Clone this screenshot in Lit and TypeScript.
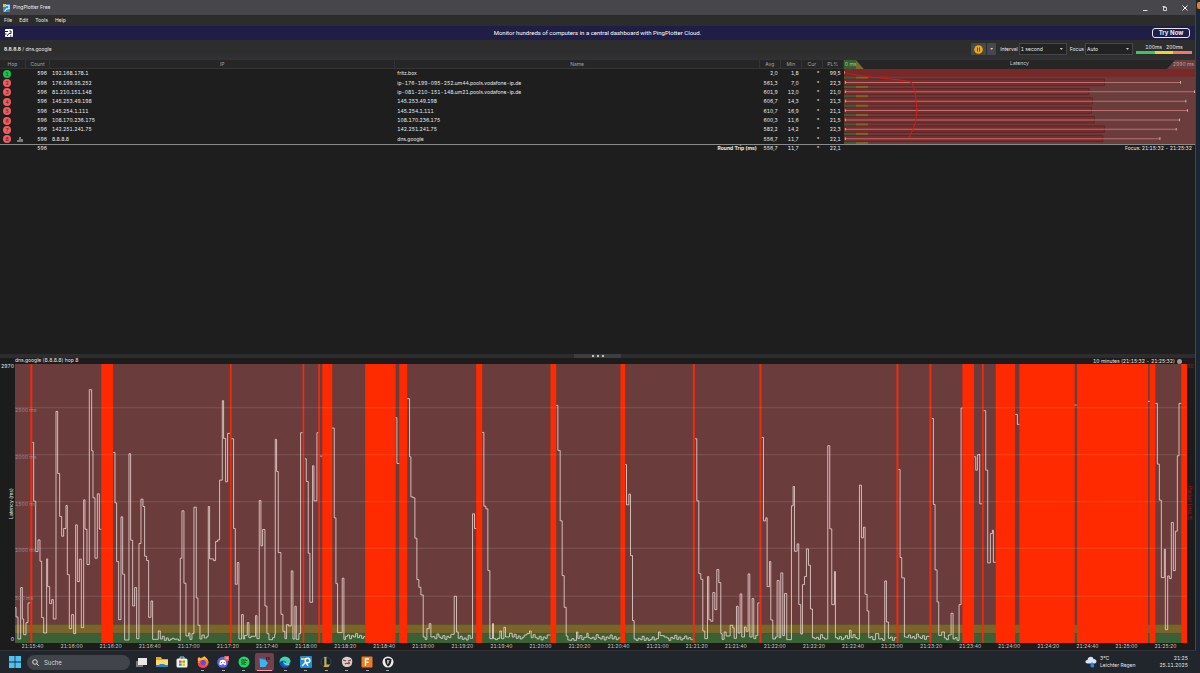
import { LitElement, html, svg, css } from "lit";
import { customElement } from "lit/decorators.js";

interface Hop {
  ip: string;
  name: string;
  avg: string;
  min: string;
  loss: string;
  bar: number;
  max: number;
}

const HOPS: Hop[] = [
  { ip: "192.168.178.1", name: "fritz.box", avg: "2,0", min: "1,8", loss: "99,5", bar: 1055, max: 0 },
  { ip: "176.199.95.252", name: "ip-176-199-095-252.um44.pools.vodafone-ip.de", avg: "561,3", min: "7,0", loss: "22,3", bar: 783, max: 1011 },
  { ip: "81.210.151.148", name: "ip-081-210-151-148.um21.pools.vodafone-ip.de", avg: "601,9", min: "12,0", loss: "21,0", bar: 736, max: 1053 },
  { ip: "145.253.49.198", name: "145.253.49.198", avg: "606,7", min: "14,3", loss: "21,3", bar: 747, max: 1027 },
  { ip: "145.254.1.111", name: "145.254.1.111", avg: "610,7", min: "16,9", loss: "21,1", bar: 743, max: 1032 },
  { ip: "108.170.236.175", name: "108.170.236.175", avg: "600,3", min: "11,6", loss: "21,5", bar: 752, max: 1008 },
  { ip: "142.251.241.75", name: "142.251.241.75", avg: "582,2", min: "14,2", loss: "22,3", bar: 783, max: 998 },
  { ip: "8.8.8.8", name: "dns.google", avg: "556,7", min: "11,7", loss: "22,1", bar: 778, max: 949 },
];

// Packet loss spans: start, end
const LOSS: [number, number][] = [
  [90, 96], [303, 338], [689, 694], [907, 912], [954, 959], [966, 996], [1095, 1186],
  [1197, 1221], [1428, 1446], [1651, 1668], [1861, 1875], [2078, 2084], [2278, 2284],
  [2689, 2695], [2788, 2794], [2887, 2922], [2946, 2951], [2987, 3045], [3058, 3224],
  [3231, 3444], [3449, 3466], [3544, 3561],
];

// Latency runs between losses: "x level" steps, closed by the final x
const RUNS: string[] = [
  "44 772 47 800 53 866 61 712 66 806 70 853 77 817 83 758 90",
  "96 277 100 453 106 604 113 569 119 633 124 802 130 848 139 626 142 709 148 760 154 748 159 806 167 184 172 370 178 499 184 558 190 535 197 466 201 673 207 835 214 793 220 850 226 524 231 694 237 627 243 832 250 449 254 537 260 643 267 119 274 302 278 443 284 624 291 431 297 537 303",
  "338 307 344 458 349 634 355 808 362 500 367 672 373 869 386 311 391 570 397 767 403 712 409 865 416 580 422 447 428 469 433 618 439 631 445 801 452 752 457 867 474 842 480 866 515 864 522 867 540 624 545 482 551 699 557 857 565 848 569 867 575 850 581 471 588 743 593 825 599 866 605 854 612 863 620 858 624 469 628 626 640 631 646 574 652 569 658 390 666 152 670 265 676 395 682 250 689",
  "694 266 700 535 705 702 711 637 716 866 724 793 729 866 733 855 741 817 746 862 752 858 766 796 770 865 777 451 782 587 787 538 794 767 800 850 806 868 817 862 823 852 825 268 829 364 834 607 842 792 848 843 854 865 859 823 865 827 873 662 878 866 884 768 888 867 896 850 901 248 907",
  "914 326 918 394 924 609 929 756 937 347 941 452 950 248 954",
  "960 318 966",
  "996 234 1002 503 1007 700 1012 847 1026 684 1031 867 1036 858 1095",
  "1186 203 1190 340 1197",
  "1221 146 1228 320 1232 440 1238 443 1244 564 1250 688 1256 711 1262 734 1269 860 1275 867 1280 835 1287 820 1292 860 1362 738 1369 845 1374 864 1417 491 1423 535 1428",
  "1446 247 1451 468 1457 476 1463 661 1469 865 1477 820 1480 865 1499 842 1504 865 1511 831 1516 860 1528 849 1536 860 1580 850 1588 842 1593 862 1651",
  "1668 166 1673 301 1680 512 1686 676 1692 771 1698 857 1703 869 1729 845 1733 864 1760 849 1764 862 1861",
  "1875 343 1879 464 1886 432 1891 616 1897 811 1902 866 1975 845 1980 856 2000 863 2078",
  "2085 266 2090 452 2096 670 2102 687 2108 842 2114 865 2122 679 2126 808 2132 813 2138 727 2144 778 2150 658 2156 697 2162 850 2166 867 2172 845 2178 857 2190 825 2198 833 2202 864 2209 768 2214 848 2220 731 2225 860 2233 830 2238 843 2244 671 2249 860 2256 745 2261 865 2267 855 2273 758 2278",
  "2285 262 2290 512 2297 503 2301 709 2308 634 2312 809 2318 866 2326 860 2331 691 2337 862 2342 668 2348 856 2353 730 2360 868 2374 467 2379 409 2383 603 2391 581 2396 763 2402 851 2407 703 2413 679 2419 596 2425 645 2431 776 2437 862 2483 287 2489 536 2495 763 2503 664 2506 862 2548 840 2553 862 2578 405 2584 563 2590 531 2595 732 2601 782 2606 862 2626 850 2636 866 2654 692 2659 815 2665 864 2689",
  "2695 358 2700 622 2705 683 2713 860 2788",
  "2795 205 2800 463 2805 659 2811 755 2816 855 2825 845 2833 863 2853 789 2859 866 2877 763 2883 174 2887",
  "2922 320 2927 360 2932 314 2938 312 2939 461 2946",
  "2951 182 2957 360 2963 638 2971 550 2977 540 2980 636 2987",
  "3045 193 3052 223 3058",
  "3224 165 3230",
  "3444 154 3449",
  "3466 160 3472 342 3478 450 3484 682 3493 597 3496 838 3503 677 3508 685 3514 517 3520 661 3526 543 3532 317 3537 160 3544",
];

const RIPPLE = [2, -8, 4, -3, 6, 1, -6, 3, -1, 5, -9, 0, 4, -4, 7, -2];

// Builds a stepped outline; long idle stretches get a small ripple
function stepPath(run: string): string {
  const n = run.split(" ").map(Number);
  let d = `M${n[0]} ${n[1]}`;
  for (let i = 0; i + 2 < n.length; i += 2) {
    const level = n[i + 1];
    const next = n[i + 2];
    if (i > 0) d += `V${level}`;
    if (level > 850 && next - n[i] > 17) {
      for (let x = n[i] + 6; x < next - 4; x += 6) {
        d += `H${x}V${Math.min(870, level + RIPPLE[Math.floor(x / 6) % RIPPLE.length])}`;
      }
    }
    d += `H${next}`;
  }
  return d;
}

const TIMES = Array.from({ length: 30 }, (_, i) => {
  const s = 15 * 60 + 40 + i * 20;
  return `21:${String(Math.floor(s / 60)).padStart(2, "0")}:${String(s % 60).padStart(2, "0")}`;
});

const LEVELS = [
  { text: "2500 ms", y: 173 },
  { text: "2000 ms", y: 314 },
  { text: "1500 ms", y: 455 },
  { text: "1000 ms", y: 594 },
  { text: "500 ms", y: 738 },
];

const base = css`
  * { box-sizing: border-box; }
  button, input, select { font: inherit; color: inherit; margin: 0; padding: 0; border: 0; background: none; border-radius: 0; outline: none; }
  svg { display: block; }
`;

@customElement("hop-table")
export class HopTable extends LitElement {
  static styles = [base, css`
    :host { display: block; }
    table { width: 100%; table-layout: fixed; border-collapse: separate; border-spacing: 0; }
    .c-hop { width: 26px; }
    .c-count { width: 24px; }
    .c-ip { width: 28.9%; }
    .c-name { width: 30.5%; }
    .c-num { width: 21px; }
    th, td { padding: 0; line-height: 7px; white-space: nowrap; }
    th { height: 9px; background: #262626; color: #a2a2a2; font-weight: 400; text-align: center; border-right: 1px solid #343434; border-bottom: 1px solid #343434; }
    th.lat { border: 0; }
    .head { display: grid; grid-template-columns: 1fr auto 1fr; height: 9px; color: #d0d0d0; line-height: 7px; }
    .low { width: 20px; text-align: left; padding-left: 1px; line-height: 9px; color: #a9c7a2; background: linear-gradient(90deg, #36602f 12px, #776a2b 12px); clip-path: polygon(0 0, 12px 0, 100% 100%, 0 100%); }
    .high { justify-self: end; width: 28px; text-align: right; padding-right: 1px; line-height: 9px; color: #c39b9b; background: #6b3c3c; clip-path: polygon(8px 0, 100% 0, 100% 100%, 0 100%); }
    tbody tr { height: 9px; }
    td { color: #ececec; }
    .num { text-align: right; padding-right: 3px; }
    .text { padding-left: 2px; overflow: hidden; }
    .hop { display: flex; align-items: center; gap: 6px; padding-left: 3px; }
    .dot { width: 8px; height: 8px; border-radius: 50%; background: #f25c5c; color: #5a1414; text-align: center; line-height: 8px; }
    .dot.ok { background: #17c14a; color: #0b4a1c; }
    .graph svg { width: 100%; height: 75px; }
    tfoot td { border-top: 1px solid #8a8a8a; height: 8px; line-height: 6px; vertical-align: top; }
    .focus { text-align: right; padding-right: 3px; }
  `];

  private graph() {
    return svg`<svg viewBox="0 0 1055 224" preserveAspectRatio="none" aria-label="Latency per hop">
      <rect width="1055" height="224" fill="#6b3c3c"/>
      <rect width="36" height="224" fill="#3b6035"/>
      <rect x="36" width="36" height="224" fill="#7a662b"/>
      ${HOPS.map((h, i) => {
        const c = 11 + i * 28;
        return i === 0
          ? svg`<rect y="0" width="1055" height="23" fill="#782828"/><rect y="8" width="3" height="5" fill="#eee"/>`
          : svg`<rect x="0" y=${c - 9} width=${h.bar} height="19" fill="#782c2c" stroke="#562020" stroke-width="2"/>
              <path d="M4 ${c + 1}H${h.max}" stroke="#b87272" stroke-width="3"/>
              <path d="M4 ${c - 3}V${c + 5}M${h.max} ${c - 3}V${c + 5}" stroke="#dcaaaa" stroke-width="3"/>`;
      })}
      <path d="M1 10C30 22 150 28 200 39C214 44 217 92 219 122C220 150 208 182 195 206" fill="none" stroke="#d01c1c" stroke-width="3"/>
    </svg>`;
  }

  render() {
    return html`<table>
      <colgroup>
        <col class="c-hop"><col class="c-count"><col class="c-ip"><col class="c-name">
        <col class="c-num"><col class="c-num"><col class="c-num"><col class="c-num"><col>
      </colgroup>
      <thead><tr>
        <th>Hop</th><th>Count</th><th>IP</th><th>Name</th><th>Avg</th><th>Min</th><th>Cur</th><th>PL%</th>
        <th class="lat"><div class="head"><span class="low">0 ms</span><span>Latency</span><span class="high">2990 ms</span></div></th>
      </tr></thead>
      <tbody>${HOPS.map((h, i) => html`<tr>
        <td><div class="hop"><span class="dot ${i === 0 ? "ok" : ""}">${i + 1}</span>${i === 7
          ? html`<svg width="6" height="5" viewBox="0 0 6 5"><path d="M1 5V3M3 5V0M5 5V2" stroke="#bbb" stroke-width="1.2"/></svg>` : ""}</div></td>
        <td class="num">596</td><td class="text">${h.ip}</td><td class="text">${h.name}</td>
        <td class="num">${h.avg}</td><td class="num">${h.min}</td><td class="num">*</td><td class="num">${h.loss}</td>
        ${i === 0 ? html`<td class="graph" rowspan="8">${this.graph()}</td>` : ""}
      </tr>`)}</tbody>
      <tfoot><tr>
        <td></td><td class="num">596</td><td></td><td class="num"><b>Round Trip (ms)</b></td>
        <td class="num">556,7</td><td class="num">11,7</td><td class="num">*</td><td class="num">22,1</td>
        <td class="focus">Focus: 21:15:32 - 21:25:32</td>
      </tr></tfoot>
    </table>`;
  }
}

@customElement("time-graph")
export class TimeGraph extends LitElement {
  static styles = [base, css`
    :host { display: grid; grid-template-columns: 15px minmax(0, 1fr) 8px; grid-template-rows: 6px minmax(0, 1fr) 7px; line-height: 6px; color: #e8e8e8; background: #1c1c1c; }
    .top { grid-column: 2 / -1; display: flex; justify-content: space-between; padding-right: 13px; line-height: 5px; }
    .range { display: flex; align-items: center; gap: 2px; }
    .knob { width: 5px; height: 5px; border-radius: 50%; background: #9a9a9a; }
    .left { grid-column: 1; grid-row: 2; display: flex; flex-direction: column; justify-content: space-between; align-items: flex-end; padding: 0 1px 1px 0; line-height: 5px; }
    .turn { writing-mode: vertical-rl; transform: rotate(180deg); }
    .plot { position: relative; grid-column: 2; grid-row: 2; }
    .plot svg { position: absolute; inset: 0; width: 100%; height: 100%; }
    .mark { position: absolute; left: 0; color: #a38585; line-height: 5px; }
    .right { grid-column: 3; grid-row: 2; color: #a81a14; display: grid; grid-template-rows: 1fr auto 1fr; justify-items: start; line-height: 5px; }
    .down { writing-mode: vertical-rl; }
    .times { grid-column: 1 / -1; margin: 0 10px 0 13px; display: grid; grid-template-columns: repeat(30, minmax(0, 1fr)); justify-items: center; color: #cacaca; white-space: nowrap; line-height: 6px; }
  `];

  render() {
    return html`
      <div class="top"><span>dns.google (8.8.8.8) hop 8</span><span class="range">10 minutes (21:15:32 - 21:25:32)<i class="knob"></i></span></div>
      <div class="left"><span>2970</span><span class="turn">Latency (ms)</span><span>0</span></div>
      <div class="plot">
        <svg viewBox="44 42 3517 836" preserveAspectRatio="none" aria-label="Latency over time">
          <rect x="44" y="42" width="3517" height="780" fill="#6b3c3c"/>
          <rect x="44" y="822" width="3517" height="28" fill="#79642b"/>
          <rect x="44" y="850" width="3517" height="28" fill="#3b6035"/>
          ${LOSS.map(([a, b]) => svg`<rect x=${a} y="42" width=${b - a} height="836" fill=${b - a < 8 ? "#f02c10" : "#ff2a00"}/>`)}
          ${LEVELS.map((l) => svg`<path d="M44 ${l.y}H3561" stroke="#fff" stroke-opacity="0.13" stroke-width="3"/>`)}
          ${RUNS.map((r) => svg`<path d=${stepPath(r)} fill="none" stroke="#f2dfdb" stroke-opacity="0.9" stroke-width="2.6"/>`)}
        </svg>
        ${LEVELS.map((l) => html`<span class="mark" style="top:${((l.y - 42) / 8.36).toFixed(1)}%">${l.text}</span>`)}
      </div>
      <div class="right"><span>30</span><span class="down">Packet Loss %</span></div>
      <div class="times">${TIMES.map((t) => html`<span>${t}</span>`)}</div>`;
  }
}

const APPS: { name: string; running?: boolean; active?: boolean; art: unknown }[] = [
  { name: "Task view", art: svg`<path d="M1 5h7v6H1z" fill="#777b80"/><path d="M3 2h9v7H3z" fill="#e8e8e8"/>` },
  { name: "Explorer", art: svg`<path d="M0 1h5l1 2h6v8H0z" fill="#e8a820"/><path d="M0 4h12v5H0z" fill="#ffd965"/><path d="M0 9h12v2H0z" fill="#2d7fd0"/><path d="M3.500 8h5v3h-5z" fill="#2d7fd0"/>` },
  { name: "Store", art: svg`<path d="M4 3V1h4v2" fill="none" stroke="#9fd4ee"/><rect x="0.5" y="2.5" width="11" height="9" rx="1.5" fill="#f1f1f1"/><path d="M3 4.5h2.6v2.3H3z" fill="#f25022"/><path d="M6.4 4.5H9v2.3H6.4z" fill="#7fba00"/><path d="M3 7.5h2.6v2.3H3z" fill="#00a4ef"/><path d="M6.4 7.5H9v2.3H6.4z" fill="#ffb900"/>` },
  { name: "Firefox", running: true, art: svg`<circle cx="6" cy="6.5" r="5.3" fill="#ff7a1f"/><path d="M1 5C0 2 2 1 2 1l2 2c3-2 3-3 3-3 5 3 5 7 4 9 1-4-1-5-3-6z" fill="#ffc130"/><circle cx="6" cy="6.8" r="2.8" fill="#7141d8"/><path d="M1 7c0 6 9 6 10 1-2 2-6 3-7-1z" fill="#ff3b52"/>` },
  { name: "Discord", running: true, art: svg`<circle cx="5.7" cy="6.3" r="5.5" fill="#5b65ea"/><path d="M3 4.5c2-1 4-1 5.5 0l.8 4-1.8.8-.8-1H5l-.8 1-2-.8z" fill="#fff"/><circle cx="4.5" cy="6.6" r=".7" fill="#5b65ea"/><circle cx="7.2" cy="6.6" r=".7" fill="#5b65ea"/><circle cx="10" cy="2" r="3" fill="#ec6570"/><path d="M8.800 2h2.400" stroke="#fff" stroke-width=".8"/>` },
  { name: "Spotify", running: true, art: svg`<circle cx="6" cy="6" r="5.5" fill="#1ed760"/><path d="M3 4.3c2.200-.7 4.500-.5 6.300.5M3.200 6.300c2-.5 3.700-.3 5.200.5M3.500 8.100c1.500-.4 3-.2 4 .4" fill="none" stroke="#10391e" stroke-width="1"/>` },
  { name: "Capture", running: true, active: true, art: svg`<path d="M1 2l7 1v8H2z" fill="#1389d8"/><path d="M2 3l5 1 3 3-3 4H2z" fill="#3cb3f3"/><path d="M8 1h1.300v3H8zM10.300 1h1.300v3h-1.300z" fill="#2c2430"/>` },
  { name: "Edge", running: true, art: svg`<circle cx="6" cy="6" r="5.500" fill="#1683d8"/><path d="M.6 6C1 0 9-1 11.300 4c.8 3-2 4-4 3.200C8 5 5 3.500 3.500 5 2 5 1 5.500.6 6z" fill="#44d7a0"/><path d="M4 6c-1 3 2 5 6 3.500C7 13 1 11 1 6.500 2 5 3 4.600 4.500 4.800 4 5 4 6 4 6z" fill="#0d4fa6"/><path d="M5 6.500c.5 1.500 2.500 2 5 1.500" fill="none" stroke="#d9eefb"/>` },
  { name: "PingPlotter", running: true, art: svg`<rect width="12" height="12" rx="1" fill="#1f8fdc"/><path d="M1 2h5v2H1z" fill="#f4c63a"/><circle cx="7.500" cy="4.500" r="2.300" fill="none" stroke="#fff" stroke-width="1.500"/><path d="M6 6l-4 4M6 6.500l2 3.500" fill="none" stroke="#fff" stroke-width="1.500"/>` },
  { name: "League", running: true, art: svg`<circle cx="6" cy="6" r="5" fill="#112337" stroke="#31475c"/><path d="M4 1h2.500v7.500H10L8.500 11H3.500l.8-1.500V2z" fill="#d0a94a"/>` },
  { name: "Game", running: true, art: svg`<path d="M1 6c-1-3 3-6 6-5 4 0 5 4 4 6 0 3-3 4-5 4C3 11 1 9 1 6z" fill="#d9cfca"/><path d="M2 4l3 1M7 5l3-1M4 8c1-1 3-1 4 0" stroke="#6f4242" stroke-width="1.200" fill="none"/><circle cx="8" cy="7" r="1.200" fill="#b84940"/>` },
  { name: "Fancy", running: true, art: svg`<rect x=".5" y=".5" width="11" height="11" rx="1" fill="#f47a1e"/><path d="M4.500 10V3H8M4.500 6.300h3" fill="none" stroke="#fff" stroke-width="1.400"/>` },
  { name: "Shield", running: true, art: svg`<circle cx="6" cy="6" r="5.500" fill="#eee"/><path d="M3 3l3-1 3.500 1C9.500 7 8 9.500 6 10.500 4 9 3 7 3 3z" fill="#222"/><path d="M5 4l3 .5-2 1.500 1 .5-1.500 2z" fill="#ddd"/>` },
];

@customElement("task-bar")
export class TaskBar extends LitElement {
  static styles = [base, css`
    :host { display: flex; align-items: center; height: 22px; padding: 0 12px 0 5px; background: #21252c; color: #e6e6e6; line-height: 7px; }
    .start { width: 20px; height: 18px; display: grid; place-items: center; }
    .search { display: flex; align-items: center; gap: 5px; width: 103px; height: 15px; margin: 0 1px 0 2px; padding-left: 5px; border-radius: 8px; background: #414449; }
    .search input { width: 70px; font-size: 6px; line-height: 9px; }
    .search input::placeholder { color: #d8d8d8; opacity: 1; }
    .apps { display: grid; grid-template-columns: repeat(13, 1fr); width: 267px; justify-items: center; }
    .app { position: relative; width: 19px; height: 18px; display: grid; place-items: center; border-radius: 2px; }
    .app.on::after { content: ""; position: absolute; left: 8px; bottom: 0; width: 3px; height: 1px; background: #a9a9a9; }
    .app.active { background: #74404a; }
    .app.active::after { left: 2px; width: 15px; background: #f0a0a8; }
    .weather { display: flex; align-items: center; gap: 3px; margin-left: auto; width: 71px; }
    .clock { width: 32px; text-align: right; }
    .lines span { display: block; white-space: nowrap; }
  `];

  render() {
    return html`
      <button class="start" aria-label="Start"><svg width="12" height="12" viewBox="0 0 12 12"><path d="M0 0h5.600v5.600H0zM6.400 0H12v5.600H6.400zM0 6.400h5.600V12H0zM6.400 6.400H12V12H6.400z" fill="#4cc2f5"/></svg></button>
      <label class="search">
        <svg width="7" height="7" viewBox="0 0 7 7"><circle cx="3" cy="3" r="2.300" fill="none" stroke="#ddd"/><path d="M4.600 4.600L6.800 6.800" stroke="#ddd"/></svg>
        <input type="text" placeholder="Suche" aria-label="Suche">
      </label>
      <div class="apps">${APPS.map((a) => html`<button class="app ${a.running ? "on" : ""} ${a.active ? "active" : ""}" aria-label=${a.name}>
        <svg width="12" height="12" viewBox="0 0 12 12">${a.art}</svg></button>`)}</div>
      <div class="weather">
        <svg width="12" height="12" viewBox="0 0 12 12"><path d="M2.500 7.500C-.5 7 0 4 2.500 4 3 0 8 0 8.500 3c3.500 0 4 4 1 4.500z" fill="#d5e4f6"/><path d="M7 6c-3 4-1 5.500.5 5.500S10.500 10 7 6z" fill="#2b86e4"/></svg>
        <div class="lines"><span>3°C</span><span>Leichter Regen</span></div>
      </div>
      <div class="clock lines"><span>21:25</span><span>25.11.2025</span></div>`;
  }
}

@customElement("app-root")
export class AppRoot extends LitElement {
  static styles = [base, css`
    :host { display: flex; flex-direction: column; height: 100vh; overflow: hidden; font-family: Inter, "Open Sans", "Noto Sans", sans-serif; font-size: 5px; font-variant-numeric: tabular-nums; line-height: 7px; color: #ececec; background: #1b2532; }
    .desktop { flex: 1; min-height: 0; display: flex; }
    .window { flex: 1; min-width: 0; display: flex; flex-direction: column; background: #1e1e1e; border-right: 1px solid #454550; border-bottom: 1px solid #34343a; }
    .edge { width: 4px; background: #1b2635; }
    .badge { width: 3px; height: 7px; margin: 2px 0 0 1px; background: #e8801f; border-radius: 2px 0 0 2px; }
    .title { display: flex; align-items: center; height: 15px; padding-left: 3px; gap: 3px; background: #46464b; }
    .controls { display: flex; margin-left: auto; }
    .controls button { width: 20px; height: 15px; display: grid; place-items: center; }
    .menu { display: flex; gap: 7px; height: 11px; padding-left: 4px; background: #2c2c2c; }
    .banner { display: grid; grid-template-columns: 1fr auto 1fr; align-items: center; height: 14px; padding: 0 5px; background: #201e47; }
    .pitch { font-family: Roboto, "Liberation Sans", sans-serif; font-size: 6px; line-height: 8px; color: #fff; }
    .try { justify-self: end; width: 38px; height: 10px; border: 1px solid #e6e6f0; border-radius: 3px; font-size: 6px; font-weight: 700; line-height: 8px; }
    .tools { display: flex; align-items: center; height: 20px; padding: 0 3px 2px 4px; background: linear-gradient(#2d2d2d 60%, #323236); }
    .crumb { margin-right: auto; }
    .pause { display: flex; width: 25px; height: 12px; background: #48484c; border-radius: 1px; margin-right: 4px; }
    .pause button { width: 15px; display: grid; place-items: center; }
    .pause .more { width: 10px; border-left: 1px solid #2c2c2c; }
    .tri { width: 3px; height: 2px; background: #c8c8c8; clip-path: polygon(0 0, 100% 0, 50% 100%); }
    .field { display: flex; align-items: center; gap: 1px; margin-right: 3px; }
    .pick { display: grid; grid-template-columns: 1fr 6px; align-items: center; width: 48px; height: 12px; border: 1px solid #464646; background: #222; }
    .pick select { grid-column: 1 / -1; grid-row: 1; height: 10px; padding-left: 1px; appearance: none; }
    .pick .tri { grid-column: 2; grid-row: 1; pointer-events: none; }
    .pick option { background: #222; }
    .scale { width: 56px; }
    .marks { display: flex; justify-content: center; gap: 4px; line-height: 5px; margin-bottom: 1px; }
    .rule { display: grid; grid-template-columns: repeat(3, 1fr); height: 3px; }
    .rule i:nth-child(1) { background: #3fc463; }
    .rule i:nth-child(2) { background: #f2cf35; }
    .rule i:nth-child(3) { background: #f47474; }
    .upper { flex: 293 1 0; min-height: 0; overflow: hidden; }
    .lower { flex: 292 1 0; min-height: 0; }
    .split { height: 5px; padding-top: 1px; background: #1e1e1e; }
    .track { height: 4px; background: #2d2d2f; display: flex; justify-content: center; }
    .grip { width: 47px; display: flex; align-items: center; justify-content: center; gap: 3px; background: #3d3e40; }
    .grip i { width: 2px; height: 2px; border-radius: 50%; background: #eee; }
  `];

  render() {
    return html`
      <div class="desktop">
        <main class="window">
          <header class="title">
            <svg width="7" height="8" viewBox="0 0 7 8"><rect width="7" height="8" fill="#1f93de"/><path d="M0 0h3v3H0z" fill="#e8bf43"/><path d="M3 1.500h3v3L3.500 5 1.500 7.500" fill="none" stroke="#fff" stroke-width="1.200"/></svg>
            <span>PingPlotter Free</span>
            <div class="controls">
              <button aria-label="Minimize"><svg width="6" height="6" viewBox="0 0 6 6"><path d="M1 5.500h4.500" stroke="#ddd"/></svg></button>
              <button aria-label="Restore"><svg width="6" height="6" viewBox="0 0 6 6"><path d="M1.500 2.500h3v3h-3zM.5 1.500h3" fill="none" stroke="#ddd" stroke-width=".9"/><path d="M1.500 2.500v-1" stroke="#ddd"/></svg></button>
              <button aria-label="Close"><svg width="6" height="6" viewBox="0 0 6 6"><path d="M.5.5l5 5M5.500.5l-5 5" stroke="#eee"/></svg></button>
            </div>
          </header>
          <nav class="menu"><button>File</button><button>Edit</button><button>Tools</button><button>Help</button></nav>
          <section class="banner">
            <svg width="8" height="8" viewBox="0 0 8 8"><rect width="8" height="8" rx="1" fill="#fff"/><path d="M0 2.500h3M4.500 2h1.500v2.500H4L2 7M0 5h1.500M5 7h1.500" fill="none" stroke="#201e47" stroke-width="1"/></svg>
            <span class="pitch">Monitor hundreds of computers in a central dashboard with PingPlotter Cloud.</span>
            <button class="try">Try Now</button>
          </section>
          <section class="tools">
            <span class="crumb"><b>8.8.8.8</b> / dns.google</span>
            <div class="pause">
              <button aria-label="Pause"><svg width="9" height="9" viewBox="0 0 9 9"><circle cx="4.500" cy="4.500" r="4.300" fill="#e9a716"/><path d="M3.500 2.500v4M5.500 2.500v4" stroke="#5a4514" stroke-width="1"/></svg></button>
              <button class="more" aria-label="More"><i class="tri"></i></button>
            </div>
            <label class="field">Interval<span class="pick"><select><option>1 second</option></select><i class="tri"></i></span></label>
            <label class="field">Focus<span class="pick"><select><option>Auto</option></select><i class="tri"></i></span></label>
            <div class="scale"><div class="marks"><span>100ms</span><span>200ms</span></div><div class="rule"><i></i><i></i><i></i></div></div>
          </section>
          <div class="upper"><hop-table></hop-table></div>
          <div class="split"><div class="track"><div class="grip"><i></i><i></i><i></i></div></div></div>
          <time-graph class="lower"></time-graph>
        </main>
        <aside class="edge"><div class="badge"></div></aside>
      </div>
      <task-bar></task-bar>`;
  }
}
